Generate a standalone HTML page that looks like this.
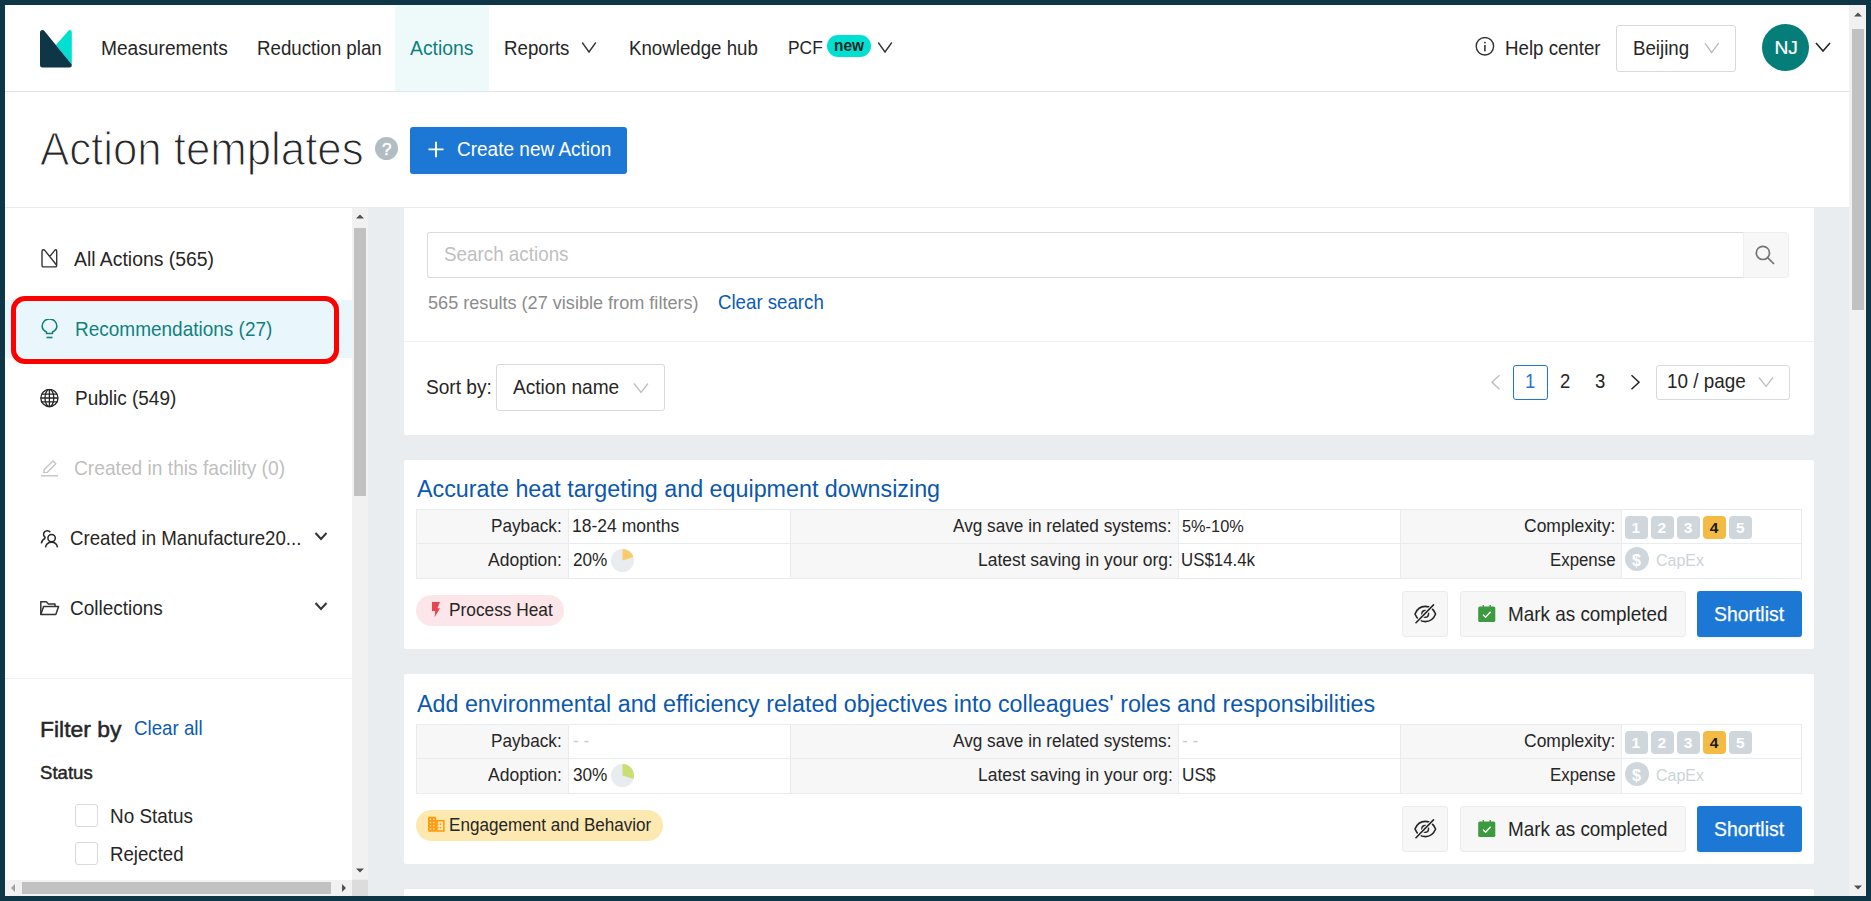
<!DOCTYPE html>
<html><head><meta charset="utf-8"><title>Action templates</title>
<style>
html,body{margin:0;padding:0;width:1871px;height:901px;overflow:hidden;background:#0e3646}
body{position:relative;font-family:"Liberation Sans",sans-serif}
.t{position:absolute;line-height:1;white-space:nowrap}
.r{position:absolute}
</style></head><body>
<div class="r" style="left:0px;top:0px;width:1871px;height:901px;background:#0e3646"></div>
<div class="r" style="left:5px;top:5px;width:1861px;height:891px;background:#fff"></div>
<div class="r" style="left:5px;top:208px;width:1845px;height:688px;background:#e9edf0"></div>
<div class="r" style="left:5px;top:91px;width:1845px;height:1px;background:#dfe5e9"></div>
<div class="r" style="left:5px;top:207px;width:1845px;height:1px;background:#e6eaed"></div>
<svg class="r" style="left:40px;top:30px" width="32" height="38" viewBox="0 0 32 38"><path d="M15.9 14.9 L28 1.2 Q29 0 30 0 Q31.8 0 31.8 2.2 L31.8 34.6 Z" fill="#00e0d0"/><path d="M0 2.8 Q0 0.1 2.6 0.1 Q3.6 0.1 4.4 1.1 L31.8 34.6 L31.8 35.2 Q31.8 37.6 29.4 37.6 H2.4 Q0 37.6 0 35.2 Z" fill="#0e3646"/></svg>
<div class="r" style="left:395px;top:5px;width:94px;height:86px;background:#eefafa"></div>
<div class="t" style="left:101px;top:38.00px;font-size:20.32px;color:#262626;font-weight:400;transform:scaleX(0.9434);transform-origin:0 0;">Measurements</div>
<div class="t" style="left:256.5px;top:39.00px;font-size:19.82px;color:#262626;font-weight:400;transform:scaleX(0.9434);transform-origin:0 0;">Reduction plan</div>
<div class="t" style="left:410px;top:38.00px;font-size:20.56px;color:#0f7f7d;font-weight:400;transform:scaleX(0.9434);transform-origin:0 0;">Actions</div>
<div class="t" style="left:503.5px;top:39.00px;font-size:19.82px;color:#262626;font-weight:400;transform:scaleX(0.9434);transform-origin:0 0;">Reports</div>
<svg class="r" style="left:581px;top:41px" width="16" height="13" viewBox="0 0 16 13"><path d="M1.2 1.5 L8 11 L14.8 1.5" fill="none" stroke="#333" stroke-width="1.35"/></svg>
<div class="t" style="left:629px;top:39.00px;font-size:19.82px;color:#262626;font-weight:400;transform:scaleX(0.9434);transform-origin:0 0;">Knowledge hub</div>
<div class="t" style="left:787.5px;top:39.00px;font-size:18.43px;color:#262626;font-weight:400;transform:scaleX(0.9434);transform-origin:0 0;">PCF</div>
<div class="r" style="left:827px;top:35px;width:44px;height:22px;background:#00e0d1;border-radius:11px"></div>
<div class="t" style="left:834px;top:37.00px;font-size:16.43px;color:#262626;font-weight:700;transform:scaleX(0.9434);transform-origin:0 0;">new</div>
<svg class="r" style="left:877px;top:41px" width="16" height="13" viewBox="0 0 16 13"><path d="M1.2 1.5 L8 11 L14.8 1.5" fill="none" stroke="#333" stroke-width="1.35"/></svg>
<svg class="r" style="left:1475px;top:37px" width="20" height="20" viewBox="0 0 20 20"><circle cx="9.9" cy="9.25" r="8.7" fill="none" stroke="#333" stroke-width="1.4"/><circle cx="9.9" cy="5.6" r="0.95" fill="#333"/><rect x="9.1" y="8" width="1.6" height="6.3" fill="#333"/></svg>
<div class="t" style="left:1504.5px;top:39.00px;font-size:19.82px;color:#262626;font-weight:400;transform:scaleX(0.9434);transform-origin:0 0;">Help center</div>
<div class="r" style="left:1616px;top:25px;width:120px;height:47px;border:1px solid #d9d9d9;border-radius:3px;box-sizing:border-box;background:#fff"></div>
<div class="t" style="left:1632.5px;top:39.00px;font-size:19.82px;color:#262626;font-weight:400;transform:scaleX(0.9434);transform-origin:0 0;">Beijing</div>
<svg class="r" style="left:1704px;top:42px" width="16" height="12" viewBox="0 0 16 12"><path d="M1 1.2 L7.6 10.6 L14.6 1.2" fill="none" stroke="#b8b8b8" stroke-width="1.3"/></svg>
<div class="r" style="left:1762px;top:24px;width:47px;height:47px;background:#057e79;border-radius:50%"></div>
<div class="t" style="left:1774.5px;top:38.00px;font-size:19.20px;color:#fff;font-weight:400;-webkit-text-stroke:0.2px #fff">NJ</div>
<svg class="r" style="left:1815px;top:42px" width="16" height="11" viewBox="0 0 16 11"><path d="M1 1 L8 9 L15 1" fill="none" stroke="#262626" stroke-width="1.6"/></svg>
<div class="t" style="left:40px;top:127.00px;font-size:45.50px;color:#262626;font-weight:400;transform:scaleX(0.962);transform-origin:0 0;-webkit-text-stroke:1.2px #fff">Action templates</div>
<div class="r" style="left:375px;top:137px;width:23px;height:23px;background:#b1bcc3;border-radius:50%"></div>
<div class="t" style="left:382px;top:141.00px;font-size:17.00px;color:#fff;font-weight:400;-webkit-text-stroke:0.5px #fff">?</div>
<div class="r" style="left:410px;top:127px;width:217px;height:47px;background:#1c77d5;border-radius:3px;box-shadow:0 2px 0 rgba(0,0,0,0.03)"></div>
<svg class="r" style="left:428px;top:141px" width="16" height="17" viewBox="0 0 16 17"><path d="M8 0.8 V16.2 M0.5 8.4 H15.5" stroke="#fff" stroke-width="1.9"/></svg>
<div class="t" style="left:456.7px;top:139.00px;font-size:20.15px;color:#fff;font-weight:400;transform:scaleX(0.9434);transform-origin:0 0;">Create new Action</div>
<div class="r" style="left:5px;top:208px;width:347px;height:688px;background:#fff"></div>
<div class="r" style="left:352px;top:208px;width:16px;height:671px;background:#f1f1f1"></div>
<div class="r" style="left:354px;top:228px;width:12px;height:268px;background:#c1c1c1"></div>
<svg class="r" style="left:355px;top:213px" width="10" height="6" viewBox="0 0 10 6"><path d="M1 5.5 L5 1.5 L9 5.5 Z" fill="#505050"/></svg>
<svg class="r" style="left:355px;top:868px" width="10" height="6" viewBox="0 0 10 6"><path d="M1 0.5 L5 4.5 L9 0.5 Z" fill="#505050"/></svg>
<div class="r" style="left:5px;top:880px;width:363px;height:16px;background:#f1f1f1"></div>
<div class="r" style="left:352px;top:880px;width:16px;height:16px;background:#dcdcdc"></div>
<div class="r" style="left:22px;top:882px;width:309px;height:12px;background:#c1c1c1"></div>
<svg class="r" style="left:10px;top:883px" width="6" height="10" viewBox="0 0 6 10"><path d="M5 1 L1 5 L5 9 Z" fill="#a0a0a0"/></svg>
<svg class="r" style="left:341px;top:883px" width="6" height="10" viewBox="0 0 6 10"><path d="M1 1 L5 5 L1 9 Z" fill="#505050"/></svg>
<svg class="r" style="left:40px;top:248px" width="19" height="21" viewBox="0 0 19 21"><g fill="none" stroke="#333" stroke-width="1.4" stroke-linejoin="round"><path d="M9.7 8.6 L14.5 2.6 Q15.2 1.8 15.9 1.8 Q16.7 1.8 16.7 3.2 V17.4 Q16.7 18.9 15.2 18.9 H3.5 Q2 18.9 2 17.4 V3.5 Q2 1.8 3.5 1.8 Q4.3 1.8 5 2.6 L16.3 16.8"/></g></svg>
<div class="t" style="left:74.2px;top:249.00px;font-size:20.54px;color:#262626;font-weight:400;transform:scaleX(0.9434);transform-origin:0 0;">All Actions (565)</div>
<div class="r" style="left:5px;top:300px;width:347px;height:58px;background:#e9f7fd"></div>
<svg class="r" style="left:41px;top:319px" width="17" height="21" viewBox="0 0 17 21"><path d="M5.5 14.5 V13 Q1.2 10.8 1.2 7.2 A7.3 7.3 0 0 1 15.8 7.2 Q15.8 10.8 11.5 13 V14.5 Z" fill="none" stroke="#13807d" stroke-width="1.6" stroke-linejoin="round"/><path d="M5.5 18.5 H11.5" stroke="#13807d" stroke-width="1.6"/></svg>
<div class="t" style="left:74.5px;top:319.00px;font-size:20.14px;color:#13807d;font-weight:400;transform:scaleX(0.9434);transform-origin:0 0;">Recommendations (27)</div>
<div class="r" style="left:11px;top:296px;width:328px;height:68px;border:5px solid #ff0000;border-radius:14px;box-sizing:border-box"></div>
<svg class="r" style="left:39px;top:389px" width="20" height="20" viewBox="0 0 20 20"><g fill="none" stroke="#262626" stroke-width="1.3"><circle cx="10.4" cy="9" r="8.6"/><ellipse cx="10.4" cy="9" rx="4.4" ry="8.6"/><path d="M1.8 9 H19 M2.6 5.2 H18.2 M2.6 12.8 H18.2 M10.4 0.4 V17.6"/></g></svg>
<div class="t" style="left:74.5px;top:388.00px;font-size:20.14px;color:#262626;font-weight:400;transform:scaleX(0.9434);transform-origin:0 0;">Public (549)</div>
<svg class="r" style="left:40px;top:459px" width="19" height="19" viewBox="0 0 19 19"><g fill="none" stroke="#c4c4c4" stroke-width="1.4" stroke-linejoin="round"><path d="M3.8 13.6 L4.3 10.6 L13 1.9 L15.8 4.7 L7.1 13.4 Z"/><path d="M1 16.8 H18"/></g></svg>
<div class="t" style="left:74.3px;top:458.00px;font-size:20.34px;color:#bfbfbf;font-weight:400;transform:scaleX(0.9434);transform-origin:0 0;">Created in this facility (0)</div>
<svg class="r" style="left:40px;top:530px" width="19" height="19" viewBox="0 0 19 19"><g fill="none" stroke="#262626" stroke-width="1.5"><path d="M10.3 2.3 A3.7 3.7 0 1 0 5.7 7.8"/><path d="M1.3 13.4 Q2 9.5 5.3 8.2"/><circle cx="11.6" cy="8.1" r="3.7"/><path d="M5.5 17.4 Q6.3 12.2 11.6 12.2 Q16.7 12.2 17.5 17.4"/></g></svg>
<div class="t" style="left:70px;top:529.00px;font-size:19.80px;color:#262626;font-weight:400;transform:scaleX(0.9434);transform-origin:0 0;">Created in Manufacture20...</div>
<svg class="r" style="left:313.5px;top:531px" width="14" height="11" viewBox="0 0 14 11"><path d="M1.5 2 L7 8 L12.5 2" fill="none" stroke="#333" stroke-width="2"/></svg>
<svg class="r" style="left:39px;top:600px" width="21" height="17" viewBox="0 0 21 17"><g fill="none" stroke="#333" stroke-width="1.5" stroke-linejoin="round"><path d="M1.8 14.4 V1.8 H7.3 L9.4 4 H16 V6.6"/><path d="M1.8 14.4 L4.6 6.6 H19.6 L16.8 14.4 Z"/></g></svg>
<div class="t" style="left:70px;top:598.00px;font-size:20.14px;color:#262626;font-weight:400;transform:scaleX(0.9434);transform-origin:0 0;">Collections</div>
<svg class="r" style="left:313.5px;top:601px" width="14" height="11" viewBox="0 0 14 11"><path d="M1.5 2 L7 8 L12.5 2" fill="none" stroke="#333" stroke-width="2"/></svg>
<div class="r" style="left:5px;top:678px;width:347px;height:1px;background:#eceff1"></div>
<div class="t" style="left:40px;top:718.00px;font-size:22.90px;color:#262626;font-weight:400;-webkit-text-stroke:0.5px #262626">Filter by</div>
<div class="t" style="left:133.6px;top:719.00px;font-size:19.85px;color:#0b5bb5;font-weight:400;transform:scaleX(0.9434);transform-origin:0 0;">Clear all</div>
<div class="t" style="left:40px;top:764.00px;font-size:18.60px;color:#262626;font-weight:400;-webkit-text-stroke:0.45px #262626">Status</div>
<div class="r" style="left:75px;top:804px;width:23px;height:23px;border:1px solid #d9d9d9;border-radius:3px;box-sizing:border-box;background:#fff"></div>
<div class="t" style="left:110px;top:806.00px;font-size:20.06px;color:#262626;font-weight:400;transform:scaleX(0.9434);transform-origin:0 0;">No Status</div>
<div class="r" style="left:75px;top:842px;width:23px;height:23px;border:1px solid #d9d9d9;border-radius:3px;box-sizing:border-box;background:#fff"></div>
<div class="t" style="left:110px;top:845.00px;font-size:19.76px;color:#262626;font-weight:400;transform:scaleX(0.9434);transform-origin:0 0;">Rejected</div>
<div class="r" style="left:1849px;top:5px;width:17px;height:891px;background:#f1f1f1"></div>
<div class="r" style="left:1852px;top:29px;width:12px;height:281px;background:#c1c1c1"></div>
<svg class="r" style="left:1853px;top:11px" width="10" height="6" viewBox="0 0 10 6"><path d="M1 5.5 L5 1.5 L9 5.5 Z" fill="#505050"/></svg>
<svg class="r" style="left:1853px;top:885px" width="10" height="6" viewBox="0 0 10 6"><path d="M1 0.5 L5 4.5 L9 0.5 Z" fill="#505050"/></svg>
<div class="r" style="left:404px;top:208px;width:1410px;height:227px;background:#fff;border-radius:0 0 2px 2px"></div>
<div class="r" style="left:427px;top:232px;width:1317px;height:46px;border:1px solid #d9dde0;border-right:none;border-radius:3px 0 0 3px;box-sizing:border-box;background:#fff"></div>
<div class="r" style="left:1743px;top:232px;width:46px;height:46px;border:1px solid #eceef0;border-radius:0 3px 3px 0;box-sizing:border-box;background:#f7f7f7"></div>
<svg class="r" style="left:1754px;top:245px" width="22" height="22" viewBox="0 0 22 22"><g fill="none" stroke="#747474" stroke-width="1.7"><circle cx="8.9" cy="7.9" r="6.6"/><path d="M13.6 12.6 L20 19"/></g></svg>
<div class="t" style="left:443.5px;top:245.00px;font-size:19.97px;color:#bfbfbf;font-weight:400;transform:scaleX(0.9434);transform-origin:0 0;">Search actions</div>
<div class="t" style="left:428px;top:293.00px;font-size:19.19px;color:#8c8c8c;font-weight:400;transform:scaleX(0.9434);transform-origin:0 0;">565 results (27 visible from filters)</div>
<div class="t" style="left:717.6px;top:293.00px;font-size:19.79px;color:#0b5bb5;font-weight:400;transform:scaleX(0.9434);transform-origin:0 0;">Clear search</div>
<div class="r" style="left:404px;top:341px;width:1410px;height:1px;background:#eef0f2"></div>
<div class="t" style="left:426.2px;top:377.00px;font-size:20.25px;color:#262626;font-weight:400;transform:scaleX(0.9434);transform-origin:0 0;">Sort by:</div>
<div class="r" style="left:496px;top:364px;width:169px;height:47px;border:1px solid #d9d9d9;border-radius:3px;box-sizing:border-box;background:#fff"></div>
<div class="t" style="left:512.5px;top:377.00px;font-size:20.25px;color:#262626;font-weight:400;transform:scaleX(0.9434);transform-origin:0 0;">Action name</div>
<svg class="r" style="left:633px;top:382px" width="16" height="12" viewBox="0 0 16 12"><path d="M1 1.5 L8 10.5 L15 1.5" fill="none" stroke="#bfbfbf" stroke-width="1.3"/></svg>
<svg class="r" style="left:1489px;top:374px" width="13" height="16" viewBox="0 0 13 16"><path d="M10.5 1.2 L3 8.2 L10.5 15.2" fill="none" stroke="#bfbfbf" stroke-width="1.5"/></svg>
<div class="r" style="left:1513px;top:365px;width:35px;height:35px;border:1px solid #1f76d4;border-radius:3px;box-sizing:border-box;background:#fff"></div>
<div class="t" style="left:1524.5px;top:372.00px;font-size:19.61px;color:#1f76d4;font-weight:400;transform:scaleX(0.9434);transform-origin:0 0;">1</div>
<div class="t" style="left:1560px;top:372.00px;font-size:19.61px;color:#262626;font-weight:400;transform:scaleX(0.9434);transform-origin:0 0;">2</div>
<div class="t" style="left:1594.7px;top:372.00px;font-size:19.61px;color:#262626;font-weight:400;transform:scaleX(0.9434);transform-origin:0 0;">3</div>
<svg class="r" style="left:1629px;top:374px" width="13" height="16" viewBox="0 0 13 16"><path d="M2.5 1.2 L10 8.2 L2.5 15.2" fill="none" stroke="#262626" stroke-width="1.5"/></svg>
<div class="r" style="left:1656px;top:365px;width:134px;height:35px;border:1px solid #d9d9d9;border-radius:3px;box-sizing:border-box;background:#fff"></div>
<div class="t" style="left:1666.5px;top:371.00px;font-size:20.03px;color:#262626;font-weight:400;transform:scaleX(0.9434);transform-origin:0 0;">10 / page</div>
<svg class="r" style="left:1758px;top:376px" width="16" height="12" viewBox="0 0 16 12"><path d="M1 1.5 L8 10.5 L15 1.5" fill="none" stroke="#bfbfbf" stroke-width="1.3"/></svg>
<div class="r" style="left:404px;top:460px;width:1410px;height:189px;background:#fff;border-radius:2px"></div>
<div class="t" style="left:416.5px;top:477.00px;font-size:24.70px;color:#0b58b0;font-weight:400;transform:scaleX(0.9434);transform-origin:0 0;">Accurate heat targeting and equipment downsizing</div>
<div class="r" style="left:416px;top:509px;width:1386px;height:70px;background:#fff;border:1px solid #e8ecef;box-sizing:border-box"></div>
<div class="r" style="left:417px;top:510px;width:152px;height:68px;background:#f7f7f7"></div>
<div class="r" style="left:790px;top:510px;width:389px;height:68px;background:#f7f7f7"></div>
<div class="r" style="left:1400px;top:510px;width:222px;height:68px;background:#f7f7f7"></div>
<div class="r" style="left:568px;top:509px;width:1px;height:70px;background:#e8ecef"></div>
<div class="r" style="left:790px;top:509px;width:1px;height:70px;background:#e8ecef"></div>
<div class="r" style="left:1178px;top:509px;width:1px;height:70px;background:#e8ecef"></div>
<div class="r" style="left:1400px;top:509px;width:1px;height:70px;background:#e8ecef"></div>
<div class="r" style="left:1621px;top:509px;width:1px;height:70px;background:#e8ecef"></div>
<div class="r" style="left:416px;top:543px;width:1386px;height:1px;background:#e8ecef"></div>
<div class="t" style="left:491.3px;top:517.00px;font-size:18.23px;color:#262626;font-weight:400;transform:scaleX(0.9434);transform-origin:0 0;">Payback:</div>
<div class="t" style="left:571.5px;top:517.00px;font-size:18.58px;color:#262626;font-weight:400;transform:scaleX(0.9434);transform-origin:0 0;">18-24 months</div>
<div class="t" style="left:488px;top:551.00px;font-size:18.56px;color:#262626;font-weight:400;transform:scaleX(0.9434);transform-origin:0 0;">Adoption:</div>
<div class="t" style="left:572.5px;top:551.00px;font-size:18.23px;color:#262626;font-weight:400;transform:scaleX(0.9434);transform-origin:0 0;">20%</div>
<svg class="r" style="left:611px;top:549px" width="23" height="23" viewBox="0 0 23 23"><circle cx="11.5" cy="11.5" r="11.5" fill="#e9ecef"/><path d="M11.5 11.5 V0 A11.5 11.5 0 0 1 22.44 7.95 Z" fill="#f8cc6b"/></svg>
<div class="t" style="left:952.5px;top:517.00px;font-size:18.23px;color:#262626;font-weight:400;transform:scaleX(0.9434);transform-origin:0 0;">Avg save in related systems:</div>
<div class="t" style="left:1181.5px;top:518.00px;font-size:17.32px;color:#262626;font-weight:400;transform:scaleX(0.9434);transform-origin:0 0;">5%-10%</div>
<div class="t" style="left:978.1px;top:551.00px;font-size:18.49px;color:#262626;font-weight:400;transform:scaleX(0.9434);transform-origin:0 0;">Latest saving in your org:</div>
<div class="t" style="left:1180.5px;top:552.00px;font-size:17.87px;color:#262626;font-weight:400;transform:scaleX(0.9434);transform-origin:0 0;">US$14.4k</div>
<div class="t" style="left:1524px;top:517.00px;font-size:18.54px;color:#262626;font-weight:400;transform:scaleX(0.9434);transform-origin:0 0;">Complexity:</div>
<div class="r" style="left:1625.0px;top:515.8px;width:23px;height:23px;background:#d0d7dc;border-radius:4px"></div>
<div class="t" style="left:1631.5px;top:520.00px;font-size:15.50px;color:#fff;font-weight:700;">1</div>
<div class="r" style="left:1651.1px;top:515.8px;width:23px;height:23px;background:#d0d7dc;border-radius:4px"></div>
<div class="t" style="left:1657.6px;top:520.00px;font-size:15.50px;color:#fff;font-weight:700;">2</div>
<div class="r" style="left:1677.2px;top:515.8px;width:23px;height:23px;background:#d0d7dc;border-radius:4px"></div>
<div class="t" style="left:1683.7px;top:520.00px;font-size:15.50px;color:#fff;font-weight:700;">3</div>
<div class="r" style="left:1703.3px;top:515.8px;width:23px;height:23px;background:#f4bb44;border-radius:4px"></div>
<div class="t" style="left:1709.8px;top:520.00px;font-size:15.50px;color:#1a1a1a;font-weight:700;">4</div>
<div class="r" style="left:1729.4px;top:515.8px;width:23px;height:23px;background:#d0d7dc;border-radius:4px"></div>
<div class="t" style="left:1735.9px;top:520.00px;font-size:15.50px;color:#fff;font-weight:700;">5</div>
<div class="t" style="left:1550px;top:552.00px;font-size:17.85px;color:#262626;font-weight:400;transform:scaleX(0.9434);transform-origin:0 0;">Expense</div>
<div class="r" style="left:1625px;top:547px;width:24px;height:24px;background:#d0d7dc;border-radius:50%"></div>
<div class="t" style="left:1632px;top:553.00px;font-size:16.00px;color:#fff;font-weight:700;">$</div>
<div class="t" style="left:1655.5px;top:553.00px;font-size:16.96px;color:#cbd3d9;font-weight:400;transform:scaleX(0.9434);transform-origin:0 0;">CapEx</div>
<div class="r" style="left:416px;top:594.5px;width:148px;height:31px;background:#fde6e9;border-radius:15.5px"></div>
<svg class="r" style="left:430px;top:600px" width="12" height="19" viewBox="0 0 12 19"><path d="M2 2 H10 L7.4 8.2 H10 L4.6 17.2 L5.2 10.9 H2 Z" fill="#e8434f"/></svg>
<div class="r" style="left:1402px;top:591px;width:46px;height:46px;background:#f7f7f7;border:1px solid #e9ecee;border-radius:3px;box-sizing:border-box"></div>
<svg class="r" style="left:1413px;top:603px" width="24" height="22" viewBox="0 0 24 22"><g fill="none" stroke-linejoin="round"><path d="M2 11 C4 6 8 3.4 12.3 3.4 C16.6 3.4 20.6 6 22.6 11 C20.6 16 16.6 18.6 12.3 18.6 C8 18.6 4 16 2 11 Z" stroke="#262626" stroke-width="1.6"/><circle cx="12.2" cy="10.9" r="3.3" stroke="#262626" stroke-width="1.5"/><path d="M3 19.7 L20.5 1.9" stroke="#f7f7f7" stroke-width="3.6"/><path d="M3 19.7 L20.5 1.9" stroke="#262626" stroke-width="1.6" stroke-linecap="round"/></g></svg>
<div class="r" style="left:1460px;top:591px;width:226px;height:46px;background:#f7f7f7;border:1px solid #e9ecee;border-radius:3px;box-sizing:border-box"></div>
<svg class="r" style="left:1478px;top:605px" width="18" height="18" viewBox="0 0 18 18"><rect x="0.2" y="1.5" width="17.1" height="15.6" rx="1.6" fill="#3c9a40"/><rect x="4.6" y="0" width="1.3" height="3" fill="#3c9a40"/><rect x="11.6" y="0" width="1.3" height="3" fill="#3c9a40"/><path d="M5 9.6 L7.6 12.2 L12.6 6.8" fill="none" stroke="#fff" stroke-width="1.3"/></svg>
<div class="t" style="left:1508px;top:604.00px;font-size:20.03px;color:#262626;font-weight:400;transform:scaleX(0.9434);transform-origin:0 0;">Mark as completed</div>
<div class="r" style="left:1697px;top:591px;width:105px;height:46px;background:#1c77d5;border-radius:3px;box-shadow:0 2px 0 rgba(0,0,0,0.035)"></div>
<div class="t" style="left:1713.7px;top:604.00px;font-size:20.56px;color:#fff;font-weight:400;transform:scaleX(0.9434);transform-origin:0 0;-webkit-text-stroke:0.25px #fff">Shortlist</div>
<div class="t" style="left:449px;top:601.00px;font-size:18.34px;color:#262626;font-weight:400;transform:scaleX(0.9434);transform-origin:0 0;">Process Heat</div>
<div class="r" style="left:404px;top:674px;width:1410px;height:190px;background:#fff;border-radius:2px"></div>
<div class="t" style="left:416.5px;top:692.00px;font-size:24.70px;color:#0b58b0;font-weight:400;transform:scaleX(0.9434);transform-origin:0 0;">Add environmental and efficiency related objectives into colleagues' roles and responsibilities</div>
<div class="r" style="left:416px;top:724px;width:1386px;height:70px;background:#fff;border:1px solid #e8ecef;box-sizing:border-box"></div>
<div class="r" style="left:417px;top:725px;width:152px;height:68px;background:#f7f7f7"></div>
<div class="r" style="left:790px;top:725px;width:389px;height:68px;background:#f7f7f7"></div>
<div class="r" style="left:1400px;top:725px;width:222px;height:68px;background:#f7f7f7"></div>
<div class="r" style="left:568px;top:724px;width:1px;height:70px;background:#e8ecef"></div>
<div class="r" style="left:790px;top:724px;width:1px;height:70px;background:#e8ecef"></div>
<div class="r" style="left:1178px;top:724px;width:1px;height:70px;background:#e8ecef"></div>
<div class="r" style="left:1400px;top:724px;width:1px;height:70px;background:#e8ecef"></div>
<div class="r" style="left:1621px;top:724px;width:1px;height:70px;background:#e8ecef"></div>
<div class="r" style="left:416px;top:758px;width:1386px;height:1px;background:#e8ecef"></div>
<div class="t" style="left:491.3px;top:732.00px;font-size:18.23px;color:#262626;font-weight:400;transform:scaleX(0.9434);transform-origin:0 0;">Payback:</div>
<div class="t" style="left:573px;top:732.00px;font-size:18.23px;color:#c8cdd2;font-weight:400;transform:scaleX(0.9434);transform-origin:0 0;">- -</div>
<div class="t" style="left:488px;top:766.00px;font-size:18.56px;color:#262626;font-weight:400;transform:scaleX(0.9434);transform-origin:0 0;">Adoption:</div>
<div class="t" style="left:572.5px;top:766.00px;font-size:18.23px;color:#262626;font-weight:400;transform:scaleX(0.9434);transform-origin:0 0;">30%</div>
<svg class="r" style="left:611px;top:764px" width="23" height="23" viewBox="0 0 23 23"><circle cx="11.5" cy="11.5" r="11.5" fill="#e9ecef"/><path d="M11.5 11.5 V0 A11.5 11.5 0 0 1 22.44 15.05 Z" fill="#c9df72"/></svg>
<div class="t" style="left:952.5px;top:732.00px;font-size:18.23px;color:#262626;font-weight:400;transform:scaleX(0.9434);transform-origin:0 0;">Avg save in related systems:</div>
<div class="t" style="left:1182px;top:732.00px;font-size:18.23px;color:#c8cdd2;font-weight:400;transform:scaleX(0.9434);transform-origin:0 0;">- -</div>
<div class="t" style="left:978.1px;top:766.00px;font-size:18.49px;color:#262626;font-weight:400;transform:scaleX(0.9434);transform-origin:0 0;">Latest saving in your org:</div>
<div class="t" style="left:1181.5px;top:766.00px;font-size:18.23px;color:#262626;font-weight:400;transform:scaleX(0.9434);transform-origin:0 0;">US$</div>
<div class="t" style="left:1524px;top:732.00px;font-size:18.54px;color:#262626;font-weight:400;transform:scaleX(0.9434);transform-origin:0 0;">Complexity:</div>
<div class="r" style="left:1625.0px;top:730.8px;width:23px;height:23px;background:#d0d7dc;border-radius:4px"></div>
<div class="t" style="left:1631.5px;top:735.00px;font-size:15.50px;color:#fff;font-weight:700;">1</div>
<div class="r" style="left:1651.1px;top:730.8px;width:23px;height:23px;background:#d0d7dc;border-radius:4px"></div>
<div class="t" style="left:1657.6px;top:735.00px;font-size:15.50px;color:#fff;font-weight:700;">2</div>
<div class="r" style="left:1677.2px;top:730.8px;width:23px;height:23px;background:#d0d7dc;border-radius:4px"></div>
<div class="t" style="left:1683.7px;top:735.00px;font-size:15.50px;color:#fff;font-weight:700;">3</div>
<div class="r" style="left:1703.3px;top:730.8px;width:23px;height:23px;background:#f4bb44;border-radius:4px"></div>
<div class="t" style="left:1709.8px;top:735.00px;font-size:15.50px;color:#1a1a1a;font-weight:700;">4</div>
<div class="r" style="left:1729.4px;top:730.8px;width:23px;height:23px;background:#d0d7dc;border-radius:4px"></div>
<div class="t" style="left:1735.9px;top:735.00px;font-size:15.50px;color:#fff;font-weight:700;">5</div>
<div class="t" style="left:1550px;top:767.00px;font-size:17.85px;color:#262626;font-weight:400;transform:scaleX(0.9434);transform-origin:0 0;">Expense</div>
<div class="r" style="left:1625px;top:762px;width:24px;height:24px;background:#d0d7dc;border-radius:50%"></div>
<div class="t" style="left:1632px;top:768.00px;font-size:16.00px;color:#fff;font-weight:700;">$</div>
<div class="t" style="left:1655.5px;top:768.00px;font-size:16.96px;color:#cbd3d9;font-weight:400;transform:scaleX(0.9434);transform-origin:0 0;">CapEx</div>
<div class="r" style="left:416px;top:809.5px;width:247px;height:31px;background:#fde9b0;border-radius:15.5px"></div>
<svg class="r" style="left:428px;top:816px" width="18" height="17" viewBox="0 0 18 17"><rect x="0" y="0.7" width="8.2" height="15.1" rx="0.8" fill="#ff9b12"/><g fill="#ffeab0"><circle cx="2.5" cy="3.3" r="0.8"/><circle cx="5.8" cy="3.3" r="0.8"/><circle cx="2.5" cy="6.6" r="0.8"/><circle cx="5.8" cy="6.6" r="0.8"/><circle cx="2.5" cy="9.8" r="0.8"/><circle cx="5.8" cy="9.8" r="0.8"/><circle cx="2.5" cy="13.1" r="0.8"/><circle cx="5.8" cy="13.1" r="0.8"/></g><rect x="8.9" y="4.7" width="7" height="10.3" fill="none" stroke="#ff9b12" stroke-width="1.6"/><g fill="#ff9b12"><circle cx="12.5" cy="8.2" r="0.9"/><circle cx="12.5" cy="11.6" r="0.9"/><rect x="8.5" y="7.6" width="2" height="1.2"/><rect x="8.5" y="11" width="2" height="1.2"/></g></svg>
<div class="r" style="left:1402px;top:806px;width:46px;height:46px;background:#f7f7f7;border:1px solid #e9ecee;border-radius:3px;box-sizing:border-box"></div>
<svg class="r" style="left:1413px;top:818px" width="24" height="22" viewBox="0 0 24 22"><g fill="none" stroke-linejoin="round"><path d="M2 11 C4 6 8 3.4 12.3 3.4 C16.6 3.4 20.6 6 22.6 11 C20.6 16 16.6 18.6 12.3 18.6 C8 18.6 4 16 2 11 Z" stroke="#262626" stroke-width="1.6"/><circle cx="12.2" cy="10.9" r="3.3" stroke="#262626" stroke-width="1.5"/><path d="M3 19.7 L20.5 1.9" stroke="#f7f7f7" stroke-width="3.6"/><path d="M3 19.7 L20.5 1.9" stroke="#262626" stroke-width="1.6" stroke-linecap="round"/></g></svg>
<div class="r" style="left:1460px;top:806px;width:226px;height:46px;background:#f7f7f7;border:1px solid #e9ecee;border-radius:3px;box-sizing:border-box"></div>
<svg class="r" style="left:1478px;top:820px" width="18" height="18" viewBox="0 0 18 18"><rect x="0.2" y="1.5" width="17.1" height="15.6" rx="1.6" fill="#3c9a40"/><rect x="4.6" y="0" width="1.3" height="3" fill="#3c9a40"/><rect x="11.6" y="0" width="1.3" height="3" fill="#3c9a40"/><path d="M5 9.6 L7.6 12.2 L12.6 6.8" fill="none" stroke="#fff" stroke-width="1.3"/></svg>
<div class="t" style="left:1508px;top:819.00px;font-size:20.03px;color:#262626;font-weight:400;transform:scaleX(0.9434);transform-origin:0 0;">Mark as completed</div>
<div class="r" style="left:1697px;top:806px;width:105px;height:46px;background:#1c77d5;border-radius:3px;box-shadow:0 2px 0 rgba(0,0,0,0.035)"></div>
<div class="t" style="left:1713.7px;top:819.00px;font-size:20.56px;color:#fff;font-weight:400;transform:scaleX(0.9434);transform-origin:0 0;-webkit-text-stroke:0.25px #fff">Shortlist</div>
<div class="t" style="left:449px;top:816.00px;font-size:18.13px;color:#262626;font-weight:400;transform:scaleX(0.9434);transform-origin:0 0;">Engagement and Behavior</div>
<div class="r" style="left:404px;top:889px;width:1410px;height:7px;background:#fff;border-radius:2px 2px 0 0"></div>
</body></html>
